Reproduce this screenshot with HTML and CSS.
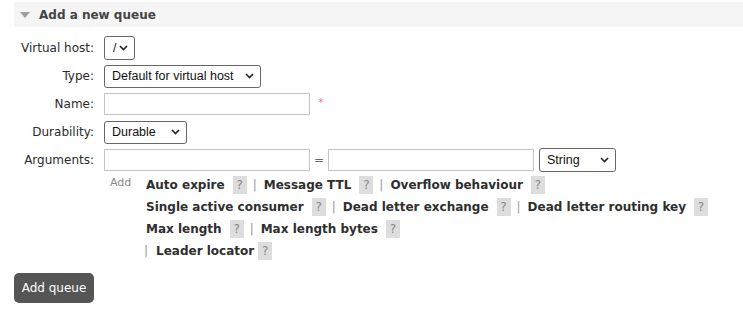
FILE: index.html
```html
<!DOCTYPE html>
<html>
<head>
<meta charset="utf-8">
<link rel="stylesheet" href="styles.css">
</head>
<body>
<div class="page">
  <div class="section-head">
    <svg class="tri" width="10" height="7" viewBox="0 0 10 7"><polygon points="0,0 10,0 5,6" fill="#a0a0a0"/></svg>
    <span class="section-title">Add a new queue</span>
  </div>
  <div class="form">
    <div class="row">
      <label class="lbl">Virtual host:</label>
      <div class="ctl"><div class="sel sel-vhost">/</div></div>
    </div>
    <div class="row">
      <label class="lbl">Type:</label>
      <div class="ctl"><div class="sel sel-type">Default for virtual host</div></div>
    </div>
    <div class="row">
      <label class="lbl">Name:</label>
      <div class="ctl"><div class="inp inp-wide"></div><span class="mand">*</span></div>
    </div>
    <div class="row">
      <label class="lbl">Durability:</label>
      <div class="ctl"><div class="sel sel-dur">Durable</div></div>
    </div>
    <div class="row">
      <label class="lbl">Arguments:</label>
      <div class="ctl"><div class="inp inp-wide"></div><span class="eq">=</span><div class="inp inp-wide"></div><div class="sel sel-str">String</div></div>
    </div>
    <div class="args">
      <span class="add">Add</span>
      <div class="links">
        <div class="line"><b>Auto expire</b><span class="help">?</span><span class="sep">|</span><b>Message TTL</b><span class="help">?</span><span class="sep">|</span><b>Overflow behaviour</b><span class="help">?</span></div>
        <div class="line"><b>Single active consumer</b><span class="help">?</span><span class="sep">|</span><b>Dead letter exchange</b><span class="help">?</span><span class="sep">|</span><b>Dead letter routing key</b><span class="help help-last">?</span></div>
        <div class="line"><b>Max length</b><span class="help">?</span><span class="sep">|</span><b>Max length bytes</b><span class="help">?</span></div>
        <div class="line line-4"><span class="sep">|</span><b>Leader locator</b><span class="help help-tight">?</span></div>
      </div>
    </div>
  </div>
  <button class="btn">Add queue</button>
</div>
</body>
</html>
```
FILE: styles.css
```css
html, body {
  margin: 0;
  padding: 0;
  background: #fff;
}
body {
  font-family: "DejaVu Sans", Verdana, sans-serif;
  font-size: 12px;
  color: #333;
}
.page {
  padding-top: 2px;
}
.section-head {
  margin-left: 14px;
  height: 25px;
  background: #f5f5f5;
  display: flex;
  align-items: center;
}
.tri {
  margin-left: 6px;
  margin-right: 9px;
  margin-top: 1px;
}
.section-title {
  font-weight: bold;
  color: #444;
  font-size: 12px;
}
.form {
  margin-top: 7px;
}
.row {
  display: flex;
  align-items: center;
  height: 28px;
}
.lbl {
  width: 94px;
  padding-right: 10px;
  text-align: right;
  color: #2b2b2b;
}
.ctl {
  display: flex;
  align-items: center;
}
.sel {
  box-sizing: border-box;
  height: 23px;
  border: 1px solid #666;
  border-radius: 3px;
  background: #fff url("data:image/svg+xml;utf8,<svg xmlns='http://www.w3.org/2000/svg' width='9' height='6' viewBox='0 0 9 6'><polyline points='1,1 4.5,4.5 8,1' fill='none' stroke='%23222' stroke-width='1.6'/></svg>") no-repeat right 6px center;
  font-family: "Liberation Sans", Arial, sans-serif;
  font-size: 12.5px;
  color: #111;
  padding-left: 7px;
  display: flex;
  align-items: center;
}
.sel-vhost { width: 31px; height: 24px; padding-left: 8px; }
.sel-type { width: 157px; }
.sel-dur { width: 83px; }
.sel-str { width: 77px; margin-left: 5px; height: 24px; }
.inp {
  box-sizing: border-box;
  height: 22px;
  border: 1px solid #c4c4c4;
  background: #fff;
}
.inp-wide { width: 206px; }
.mand {
  color: #f08080;
  font-size: 11px;
  margin-left: 8px;
  margin-top: -4px;
}
.eq {
  color: #666;
  width: 18px;
  text-align: center;
  font-size: 12px;
}
.args {
  display: flex;
  margin-left: 104px;
}
.add {
  color: #888;
  font-size: 11px;
  padding-left: 6px;
  width: 36px;
  line-height: 18px;
}
.links {
  display: flex;
  flex-direction: column;
}
.line {
  height: 22px;
  display: flex;
  align-items: center;
  color: #333;
}
.line b {
  font-weight: bold;
  color: #2e2e2e;
}
.help {
  display: inline-block;
  width: 14px;
  height: 18px;
  line-height: 18px;
  text-align: center;
  background: #ddd;
  color: #888;
  font-size: 12px;
  margin-left: 8px;
  margin-right: 6px;
}
.help-tight { margin-left: 4px; }
.sep {
  color: #999;
  margin-right: 7px;
}
.line-4 { margin-left: -2px; }
.line-4 .sep { margin-right: 8px; }
.btn {
  display: block;
  margin-left: 14px;
  margin-top: 11px;
  width: 80px;
  height: 30px;
  border: none;
  border-radius: 5px;
  background: #555;
  color: #fff;
  font-family: "DejaVu Sans", Verdana, sans-serif;
  font-size: 12px;
  padding: 0;
}
```
